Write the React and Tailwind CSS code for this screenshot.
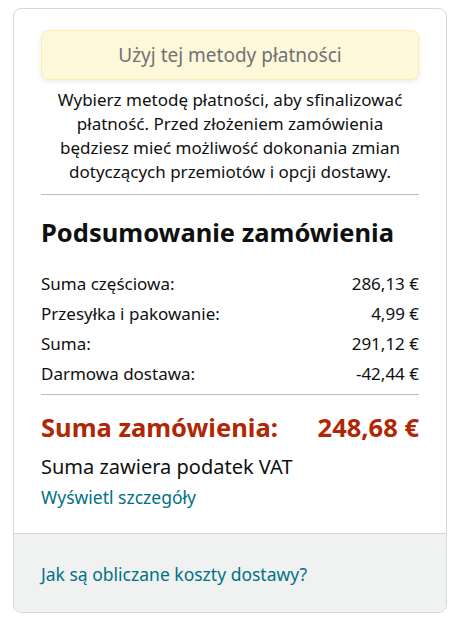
export default function App() {
  const rows = [
    ['Suma częściowa:', '286,13 €'],
    ['Przesyłka i pakowanie:', '4,99 €'],
    ['Suma:', '291,12 €'],
    ['Darmowa dostawa:', '-42,44 €'],
  ]
  return (
    <div className="min-h-screen bg-white pt-2 px-[13px] text-[#0f1111]" style={{ fontFamily: '"Noto Sans", Arial, sans-serif' }}>
      <div className="w-[434px] rounded-lg border border-[#d5d9d9] overflow-hidden">
        <div className="px-[27px] pt-[21px] pb-[24px]">
          <button className="w-full h-[50px] rounded-lg bg-[#fef8da] border border-[#fcecb0] text-[19px] text-[#6f7373] shadow-[0_2px_5px_rgba(213,217,217,0.5)]">
            Użyj tej metody płatności
          </button>
          <p className="mt-[8px] text-center text-[17px] leading-[24px] px-1">
            Wybierz metodę płatności, aby sfinalizować płatność. Przed złożeniem zamówienia będziesz mieć możliwość dokonania zmian dotyczących przemiotów i opcji dostawy.
          </p>
          <div className="mt-[10px] border-t border-[#bbbfbf]" />
          <h2 className="mt-[21px] text-[25.5px] font-bold leading-[32px]">Podsumowanie zamówienia</h2>
          <div className="mt-[25px] flex flex-col gap-[8px] text-[17px] leading-[22px]">
            {rows.map(([l, v]) => (
              <div key={l} className="flex justify-between">
                <span>{l}</span>
                <span>{v}</span>
              </div>
            ))}
          </div>
          <div className="mt-[9px] border-t border-[#bbbfbf]" />
          <div className="mt-[16px] flex justify-between text-[25.5px] font-bold leading-[32px] text-[#b12704]">
            <span>Suma zamówienia:</span>
            <span>248,68 €</span>
          </div>
          <div className="mt-[11px] text-[20px] leading-[26px]">Suma zawiera podatek VAT</div>
          <a href="#" className="block mt-[5px] text-[17.5px] leading-[24px] text-[#007185]">Wyświetl szczegóły</a>
        </div>
        <div className="border-t border-[#d5d9d9] bg-[#f0f2f2] h-[79px] px-[27px] pt-[1px] flex items-center">
          <a href="#" className="text-[17.5px] leading-[24px] text-[#007185]">Jak są obliczane koszty dostawy?</a>
        </div>
      </div>
    </div>
  )
}
